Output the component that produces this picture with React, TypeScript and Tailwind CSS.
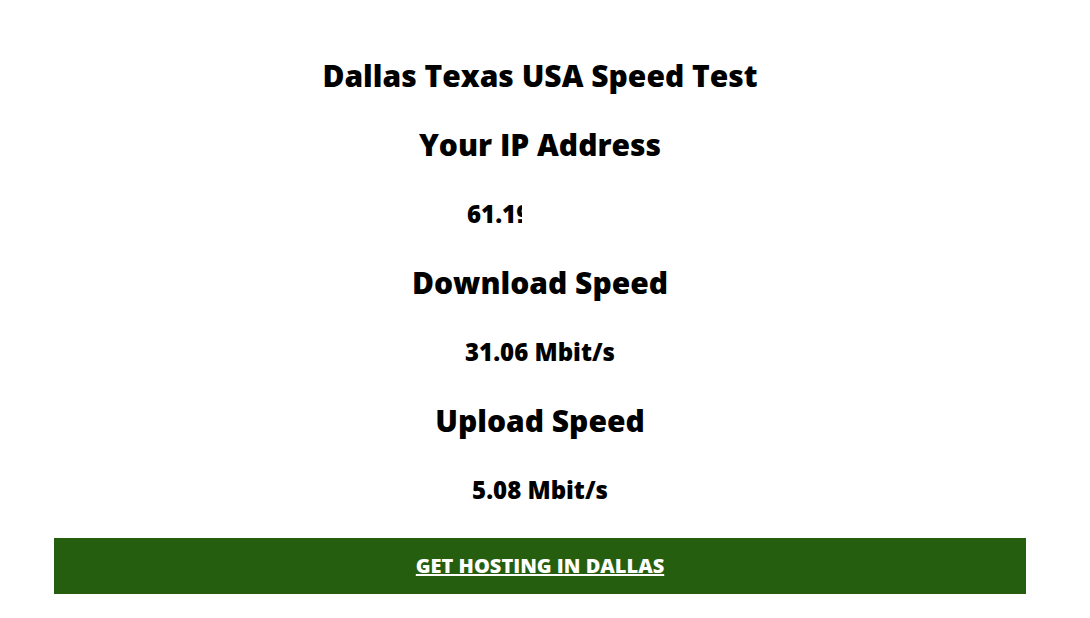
import React from 'react';

const rows = [
  { text: 'Dallas Texas USA Speed Test', heading: true },
  { text: 'Your IP Address', heading: true },
  { text: 'ip', heading: false },
  { text: 'Download Speed', heading: true },
  { text: '31.06 Mbit/s', heading: false },
  { text: 'Upload Speed', heading: true },
  { text: '5.08 Mbit/s', heading: false },
];

const App = () => {
  return (
    <div
      className="min-h-screen bg-white text-black pl-[54px] pr-[64px] pt-[41px]"
      style={{ fontFamily: '"Open Sans", "Liberation Sans", sans-serif' }}
    >
      {rows.map((row, i) => (
        <div key={i} className="h-[69px] flex items-center justify-center">
          {row.text === 'ip' ? (
            <div className="w-[146px]">
              <div className="w-[55px] overflow-hidden whitespace-nowrap text-[24px] font-extrabold">
                61.193.214.80
              </div>
            </div>
          ) : row.heading ? (
            <h2 className="text-[30px] font-extrabold">{row.text}</h2>
          ) : (
            <p className="text-[24px] font-extrabold">{row.text}</p>
          )}
        </div>
      ))}

      <div className="mt-[14px] h-[56px] bg-[#265e0f] flex items-center justify-center">
        <a href="#" className="text-white text-[20px] font-extrabold underline">
          GET HOSTING IN DALLAS
        </a>
      </div>
    </div>
  );
};

export default App;
